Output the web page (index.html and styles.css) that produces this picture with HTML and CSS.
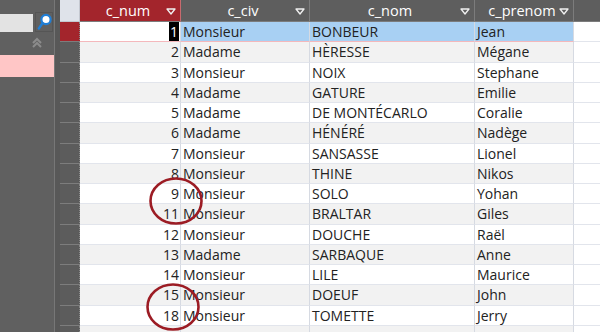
FILE: index.html
```html
<!DOCTYPE html>
<html lang="fr">
<head>
<meta charset="utf-8">
<link rel="stylesheet" href="styles.css">
</head>
<body>
<div class="app">
  <aside class="pane">
    <div class="search">
      <div class="search-box"></div>
      <div class="search-btn">
        <svg width="15" height="18" viewBox="0 0 15 18"><circle cx="9" cy="6.5" r="4.6" fill="#fff" stroke="#1f7ed6" stroke-width="2.2"/><line x1="5.6" y1="10" x2="1.8" y2="15.5" stroke="#1f7ed6" stroke-width="2.4" stroke-linecap="round"/></svg>
      </div>
    </div>
    <div class="collapse">
      <svg width="12" height="12" viewBox="0 0 12 12"><path d="M2 6 L6 2 L10 6 M2 10 L6 6 L10 10" fill="none" stroke="#8c8c8c" stroke-width="2"/></svg>
    </div>
    <div class="pink"></div>
  </aside>
  <div class="divider"></div>
  <main class="grid">
    <div class="row head">
      <div class="sel corner"></div>
      <div class="h active">c_num<svg class="dd" width="10" height="7" viewBox="0 0 10 7"><path d="M1 1 H9 L5 6 Z" fill="none" stroke="#f0f0f0" stroke-width="1.3" stroke-linejoin="round"/></svg></div>
      <div class="h">c_civ<svg class="dd" width="10" height="7" viewBox="0 0 10 7"><path d="M1 1 H9 L5 6 Z" fill="none" stroke="#f0f0f0" stroke-width="1.3" stroke-linejoin="round"/></svg></div>
      <div class="h">c_nom<svg class="dd" width="10" height="7" viewBox="0 0 10 7"><path d="M1 1 H9 L5 6 Z" fill="none" stroke="#f0f0f0" stroke-width="1.3" stroke-linejoin="round"/></svg></div>
      <div class="h">c_prenom<svg class="dd" width="10" height="7" viewBox="0 0 10 7"><path d="M1 1 H9 L5 6 Z" fill="none" stroke="#f0f0f0" stroke-width="1.3" stroke-linejoin="round"/></svg></div>
      <div class="h fill"></div>
    </div>
    <div class="row current"><div class="sel on"></div><div class="c num"><span class="caret">1</span></div><div class="c">Monsieur</div><div class="c">BONBEUR</div><div class="c">Jean</div><div class="c fill"></div></div>
    <div class="row alt"><div class="sel"></div><div class="c num">2</div><div class="c">Madame</div><div class="c">HÈRESSE</div><div class="c">Mégane</div><div class="c fill"></div></div>
    <div class="row"><div class="sel"></div><div class="c num">3</div><div class="c">Monsieur</div><div class="c">NOIX</div><div class="c">Stephane</div><div class="c fill"></div></div>
    <div class="row alt"><div class="sel"></div><div class="c num">4</div><div class="c">Madame</div><div class="c">GATURE</div><div class="c">Emilie</div><div class="c fill"></div></div>
    <div class="row"><div class="sel"></div><div class="c num">5</div><div class="c">Madame</div><div class="c">DE MONTÉCARLO</div><div class="c">Coralie</div><div class="c fill"></div></div>
    <div class="row alt"><div class="sel"></div><div class="c num">6</div><div class="c">Madame</div><div class="c">HÉNÉRÉ</div><div class="c">Nadège</div><div class="c fill"></div></div>
    <div class="row"><div class="sel"></div><div class="c num">7</div><div class="c">Monsieur</div><div class="c">SANSASSE</div><div class="c">Lionel</div><div class="c fill"></div></div>
    <div class="row alt"><div class="sel"></div><div class="c num">8</div><div class="c">Monsieur</div><div class="c">THINE</div><div class="c">Nikos</div><div class="c fill"></div></div>
    <div class="row"><div class="sel"></div><div class="c num">9</div><div class="c">Monsieur</div><div class="c">SOLO</div><div class="c">Yohan</div><div class="c fill"></div></div>
    <div class="row alt"><div class="sel"></div><div class="c num">11</div><div class="c">Monsieur</div><div class="c">BRALTAR</div><div class="c">Giles</div><div class="c fill"></div></div>
    <div class="row"><div class="sel"></div><div class="c num">12</div><div class="c">Monsieur</div><div class="c">DOUCHE</div><div class="c">Raël</div><div class="c fill"></div></div>
    <div class="row alt"><div class="sel"></div><div class="c num">13</div><div class="c">Madame</div><div class="c">SARBAQUE</div><div class="c">Anne</div><div class="c fill"></div></div>
    <div class="row"><div class="sel"></div><div class="c num">14</div><div class="c">Monsieur</div><div class="c">LILE</div><div class="c">Maurice</div><div class="c fill"></div></div>
    <div class="row alt"><div class="sel"></div><div class="c num">15</div><div class="c">Monsieur</div><div class="c">DOEUF</div><div class="c">John</div><div class="c fill"></div></div>
    <div class="row"><div class="sel"></div><div class="c num">18</div><div class="c">Monsieur</div><div class="c">TOMETTE</div><div class="c">Jerry</div><div class="c fill"></div></div>
    <div class="row alt newrow"><div class="sel star">✱</div><div class="c num"></div><div class="c"></div><div class="c"></div><div class="c"></div><div class="c fill"></div></div>
  </main>
</div>
<svg class="mark" style="left:148px;top:176px" width="56" height="50" viewBox="0 0 56 50"><ellipse cx="28" cy="25" rx="25.5" ry="22.5" fill="none" stroke="#9c1c24" stroke-width="2.6"/></svg>
<svg class="mark" style="left:145px;top:282px" width="56" height="50" viewBox="0 0 56 50"><ellipse cx="28" cy="25" rx="25.5" ry="22.5" fill="none" stroke="#9c1c24" stroke-width="2.6"/></svg>
</body>
</html>
```
FILE: styles.css
```css
* { box-sizing: border-box; }
html, body { margin: 0; padding: 0; }
body {
  width: 600px;
  height: 332px;
  overflow: hidden;
  position: relative;
  font-family: "Open Sans", "Noto Sans", sans-serif;
  font-size: 14px;
  color: #222;
  background: #fff;
}
.app { display: flex; height: 332px; }
.pane {
  width: 54px;
  flex-shrink: 0;
  background: #606060;
  display: flex;
  flex-direction: column;
  padding-top: 12px;
}
.search { display: flex; align-items: center; gap: 2px; height: 20px; flex-shrink: 0; }
.search-box {
  width: 33px;
  height: 18px;
  background: #e3e3e3;
  margin-top: 1px;
}
.search-btn {
  width: 18px;
  height: 20px;
  border: 1px solid #555;
  display: flex;
  align-items: center;
  justify-content: center;
}
.collapse { height: 22px; flex-shrink: 0; display: flex; align-items: center; justify-content: flex-end; padding-right: 11px; }
.pink { height: 22px; flex-shrink: 0; background: #ffc6c6; margin-top: 1px; }
.divider {
  width: 6px;
  flex-shrink: 0;
  background: #585858;
  border-left: 1px solid #777;
}
.grid { flex: 1; display: flex; flex-direction: column; background: #fff; overflow: hidden; }
.row {
  display: grid;
  grid-template-columns: 20px 101px 129px 165px 99px 1fr;
  height: 20.27px;
  flex-shrink: 0;
}
.row.head { height: 22px; background: #5e5e5e; }
.h {
  color: #fff;
  font-size: 14.5px;
  display: flex;
  align-items: center;
  justify-content: center;
  position: relative;
  border-right: 1px solid #7c7c7c;
  border-bottom: 1px solid #7c7c7c;
  line-height: 20px;
  padding-right: 4px;
}
.h.active { background: #a3252c; border-right-color: #c86a6e; }
.h.fill { border-right: none; }
.dd {
  position: absolute;
  right: 4px;
  top: 8px;
}
.sel {
  background: #5c5c5c;
  border-bottom: 1px solid #7d7d7d;
  border-right: 1px dotted #8a8a8a;
}
.sel.corner { background: #dfe3ea; border-bottom: 1px solid #c4c8d0; border-right: 1px solid #c4c8d0; }
.sel.on { background: #a3252c; }
.sel.star { color: #fff; font-size: 10px; text-align: center; line-height: 12px; padding-top: 6px; }
.c {
  border-right: 1px solid #d6dae2;
  border-bottom: 1px solid #e2e5ec;
  padding: 0 2px;
  line-height: 19px;
  white-space: nowrap;
  overflow: hidden;
  font-size: 14px;
}
.c.num { text-align: right; padding: 0 1px 0 0; }
.c.fill { border-right: none; background: #fff; }
.row.alt .c { background: #f2f2f2; }
.row.alt .c.fill { background: #fff; }
.row.current .c { background: #a8d0f3; border-bottom-color: #f4b8bc; }
.row.current .c.num { background: #fff; }
.row.current .c.fill { background: #fff; border-bottom-color: #e2e5ec; }
.caret { background: #000; color: #fff; display: inline-block; line-height: 19px; padding: 0 1px; }
.mark { position: absolute; }
```
